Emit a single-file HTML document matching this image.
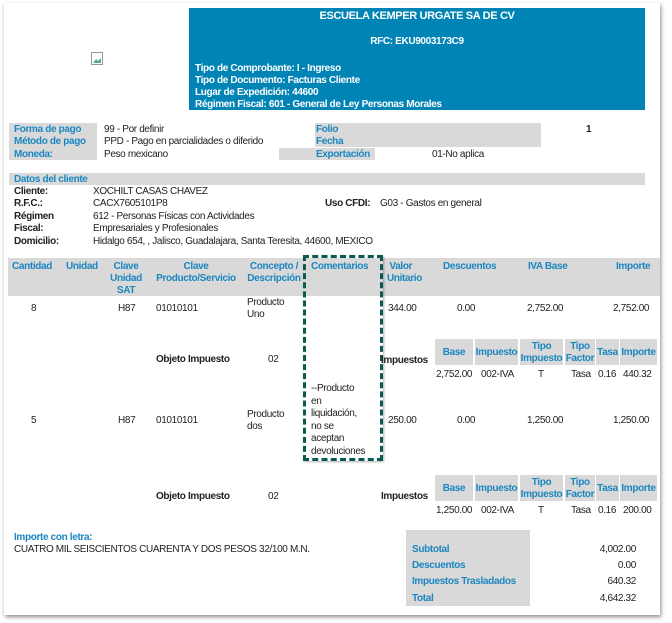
<!DOCTYPE html><html><head><meta charset="utf-8"><style>
*{margin:0;padding:0;box-sizing:border-box}
body{width:672px;height:623px;background:#fff;position:relative;overflow:hidden;font-family:"Liberation Sans",sans-serif;font-size:10px;color:#222;letter-spacing:-0.35px}
.pg{position:absolute;left:4px;top:3px;width:656px;height:612px;background:#fff;box-shadow:1px 2px 4px rgba(0,0,0,.45)}
.t{position:absolute;white-space:nowrap;line-height:12px;margin-top:1px}
.b{font-weight:bold}
.bl{color:#1b86c0}
.w{color:#fff;font-weight:bold}
.g{position:absolute;background:#d9d9d9}
.c{text-align:center}
.r{text-align:right}
</style></head><body>
<div class="pg"></div>
<div style="position:absolute;left:189px;top:8px;width:456px;height:102px;background:#0083b5"></div>
<div class="t w c" style="left:189px;width:456px;top:9px;font-size:11px">ESCUELA KEMPER URGATE SA DE CV</div>
<div class="t w c" style="left:189px;width:456px;top:35px">RFC: EKU9003173C9</div>
<div class="t w" style="left:195px;top:62px">Tipo de Comprobante: I - Ingreso</div>
<div class="t w" style="left:195px;top:74px">Tipo de Documento: Facturas Cliente</div>
<div class="t w" style="left:195px;top:86px">Lugar de Expedición: 44600</div>
<div class="t w" style="left:195px;top:98px">Régimen Fiscal: 601 - General de Ley Personas Morales</div>
<svg style="position:absolute;left:91px;top:52px" width="14" height="14"><rect x=".5" y=".5" width="11" height="12" fill="#fff" stroke="#999"/><path d="M2 11l3-4 2 2 3-3v5z" fill="#5a9"/></svg>

<div class="g" style="left:9px;top:123px;width:88px;height:37px"></div>
<div class="g" style="left:315px;top:123px;width:226px;height:24px"></div>
<div class="g" style="left:279px;top:148px;width:96px;height:12px"></div>
<div class="t bl b" style="left:14px;top:123px">Forma de pago</div>
<div class="t bl b" style="left:14px;top:135px">Método de pago</div>
<div class="t bl b" style="left:14px;top:148px">Moneda:</div>
<div class="t" style="left:104px;top:123px">99 - Por definir</div>
<div class="t" style="left:104px;top:135px">PPD - Pago en parcialidades o diferido</div>
<div class="t" style="left:104px;top:148px">Peso mexicano</div>
<div class="t bl b" style="left:316px;top:123px">Folio</div>
<div class="t bl b" style="left:316px;top:135px">Fecha</div>
<div class="t bl b" style="left:316px;top:148px">Exportación</div>
<div class="t b" style="left:586px;top:123px">1</div>
<div class="t" style="left:432px;top:148px">01-No aplica</div>

<div class="g" style="left:9px;top:173px;width:636px;height:12px"></div>
<div class="t bl b" style="left:14px;top:173px">Datos del cliente</div>
<div class="t b" style="left:14px;top:185px">Cliente:</div>
<div class="t b" style="left:14px;top:197px">R.F.C.:</div>
<div class="t b" style="left:14px;top:210px">Régimen</div>
<div class="t b" style="left:14px;top:222px">Fiscal:</div>
<div class="t b" style="left:14px;top:235px">Domicilio:</div>
<div class="t" style="left:93px;top:185px">XOCHILT CASAS CHAVEZ</div>
<div class="t" style="left:93px;top:197px">CACX7605101P8</div>
<div class="t" style="left:93px;top:210px">612 - Personas Físicas con Actividades</div>
<div class="t" style="left:93px;top:222px">Empresariales y Profesionales</div>
<div class="t" style="left:93px;top:235px">Hidalgo 654, , Jalisco, Guadalajara, Santa Teresita, 44600, MEXICO</div>
<div class="t b" style="left:325px;top:197px">Uso CFDI:</div>
<div class="t" style="left:380px;top:197px">G03 - Gastos en general</div>

<div class="g" style="left:8px;top:258px;width:652px;height:38px"></div>
<div class="t bl b" style="left:12px;top:260px">Cantidad</div>
<div class="t bl b" style="left:66px;top:260px">Unidad</div>
<div class="t bl b c" style="left:106px;width:40px;top:260px">Clave<br>Unidad<br>SAT</div>
<div class="t bl b c" style="left:151px;width:90px;top:260px">Clave<br>Producto/Servicio</div>
<div class="t bl b c" style="left:244px;width:60px;top:260px">Concepto /<br>Descripción</div>
<div class="t bl b" style="left:311px;top:260px">Comentarios</div>
<div class="t bl b" style="left:387px;top:260px">&nbsp;Valor<br>Unitario</div>
<div class="t bl b" style="left:443px;top:260px">Descuentos</div>
<div class="t bl b" style="left:528px;top:260px">IVA Base</div>
<div class="t bl b" style="left:616px;top:260px">Importe</div>
<div style="position:absolute;left:303px;top:255px;width:80px;height:206px;border:3px dashed #0b5a52;box-shadow:1px 1px 2px rgba(0,0,0,.3)"></div>

<div class="t" style="left:31px;top:302px">8</div>
<div class="t" style="left:118px;top:302px">H87</div>
<div class="t" style="left:156px;top:302px">01010101</div>
<div class="t" style="left:247px;top:296px">Producto<br>Uno</div>
<div class="t" style="left:388px;top:302px">344.00</div>
<div class="t" style="left:457px;top:302px">0.00</div>
<div class="t" style="left:527px;top:302px">2,752.00</div>
<div class="t" style="left:613px;top:302px">2,752.00</div>

<div class="t b" style="left:156px;top:353px">Objeto Impuesto</div>
<div class="t" style="left:268px;top:353px">02</div>
<div class="t b" style="left:381px;top:354px">Impuestos</div>

<div class="t" style="left:311px;top:382px;line-height:12.5px">--Producto<br>en<br>liquidación,<br>no se<br>aceptan<br>devoluciones</div>

<div class="t" style="left:31px;top:414px">5</div>
<div class="t" style="left:118px;top:414px">H87</div>
<div class="t" style="left:156px;top:414px">01010101</div>
<div class="t" style="left:247px;top:408px">Producto<br>dos</div>
<div class="t" style="left:388px;top:414px">250.00</div>
<div class="t" style="left:457px;top:414px">0.00</div>
<div class="t" style="left:527px;top:414px">1,250.00</div>
<div class="t" style="left:613px;top:414px">1,250.00</div>

<div class="t b" style="left:156px;top:490px">Objeto Impuesto</div>
<div class="t" style="left:268px;top:490px">02</div>
<div class="t b" style="left:381px;top:490px">Impuestos</div>

<div class="g" style="left:435px;top:339px;width:38px;height:26px"></div>
<div class="g" style="left:475px;top:339px;width:43px;height:26px"></div>
<div class="g" style="left:520px;top:339px;width:43px;height:26px"></div>
<div class="g" style="left:565px;top:339px;width:30px;height:26px"></div>
<div class="g" style="left:596px;top:339px;width:23px;height:26px"></div>
<div class="g" style="left:620px;top:339px;width:37px;height:26px"></div>
<div class="t bl b c" style="left:435px;width:38px;top:346px">Base</div>
<div class="t bl b c" style="left:475px;width:43px;top:346px">Impuesto</div>
<div class="t bl b c" style="left:520px;width:43px;top:340px">Tipo<br>Impuesto</div>
<div class="t bl b c" style="left:565px;width:30px;top:340px">Tipo<br>Factor</div>
<div class="t bl b c" style="left:596px;width:23px;top:346px">Tasa</div>
<div class="t bl b c" style="left:620px;width:37px;top:346px">Importe</div>
<div class="t" style="left:436px;top:368px">2,752.00</div>
<div class="t" style="left:481px;top:368px">002-IVA</div>
<div class="t" style="left:538px;top:368px">T</div>
<div class="t" style="left:571px;top:368px">Tasa</div>
<div class="t" style="left:598px;top:368px">0.16</div>
<div class="t" style="left:623px;top:368px">440.32</div>

<div class="g" style="left:435px;top:475px;width:38px;height:26px"></div>
<div class="g" style="left:475px;top:475px;width:43px;height:26px"></div>
<div class="g" style="left:520px;top:475px;width:43px;height:26px"></div>
<div class="g" style="left:565px;top:475px;width:30px;height:26px"></div>
<div class="g" style="left:596px;top:475px;width:23px;height:26px"></div>
<div class="g" style="left:620px;top:475px;width:37px;height:26px"></div>
<div class="t bl b c" style="left:435px;width:38px;top:482px">Base</div>
<div class="t bl b c" style="left:475px;width:43px;top:482px">Impuesto</div>
<div class="t bl b c" style="left:520px;width:43px;top:476px">Tipo<br>Impuesto</div>
<div class="t bl b c" style="left:565px;width:30px;top:476px">Tipo<br>Factor</div>
<div class="t bl b c" style="left:596px;width:23px;top:482px">Tasa</div>
<div class="t bl b c" style="left:620px;width:37px;top:482px">Importe</div>
<div class="t" style="left:436px;top:504px">1,250.00</div>
<div class="t" style="left:481px;top:504px">002-IVA</div>
<div class="t" style="left:538px;top:504px">T</div>
<div class="t" style="left:571px;top:504px">Tasa</div>
<div class="t" style="left:598px;top:504px">0.16</div>
<div class="t" style="left:623px;top:504px">200.00</div>

<div class="t bl b" style="left:14px;top:531px">Importe con letra:</div>
<div class="t" style="left:14px;top:543px">CUATRO MIL SEISCIENTOS CUARENTA Y DOS PESOS 32/100 M.N.</div>

<div class="g" style="left:406px;top:530px;width:124px;height:76px"></div>
<div class="t bl b" style="left:412px;top:543px">Subtotal</div>
<div class="t bl b" style="left:412px;top:559px">Descuentos</div>
<div class="t bl b" style="left:412px;top:575px">Impuestos Trasladados</div>
<div class="t bl b" style="left:412px;top:592px">Total</div>
<div class="t r" style="left:560px;width:76px;top:543px">4,002.00</div>
<div class="t r" style="left:560px;width:76px;top:559px">0.00</div>
<div class="t r" style="left:560px;width:76px;top:575px">640.32</div>
<div class="t r" style="left:560px;width:76px;top:592px">4,642.32</div>
</body></html>
